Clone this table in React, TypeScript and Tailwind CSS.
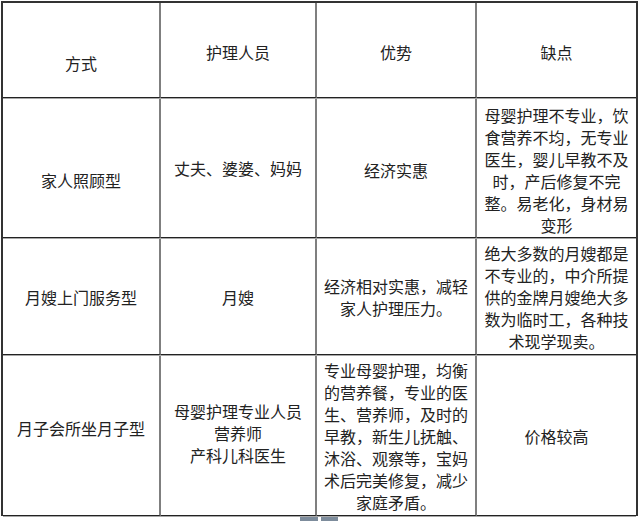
const font = { fontFamily: '"Noto Sans CJK SC", "Noto Sans", sans-serif' };

type Cell = { lines: string[]; pad?: string };

const rows: { h: string; cells: Cell[] }[] = [
  {
    h: 'h-[95px]',
    cells: [
      { lines: ['方式'], pad: 'pt-[26px]' },
      { lines: ['护理人员'], pad: 'pt-[4px]' },
      { lines: ['优势'], pad: 'pt-[4px]' },
      { lines: ['缺点'], pad: 'pt-[4px]' },
    ],
  },
  {
    h: 'h-[139px]',
    cells: [
      { lines: ['家人照顾型'], pad: 'pt-[24px]' },
      { lines: ['丈夫、婆婆、妈妈'] },
      { lines: ['经济实惠'], pad: 'pt-[4px]' },
      {
        lines: ['母婴护理不专业，饮', '食营养不均，无专业', '医生，婴儿早教不及', '时，产后修复不完', '整。易老化，身材易', '变形'],
        pad: 'pt-[3px]',
      },
    ],
  },
  {
    h: 'h-[116px]',
    cells: [
      { lines: ['月嫂上门服务型'] },
      { lines: ['月嫂'] },
      { lines: ['经济相对实惠，减轻', '家人护理压力。'] },
      { lines: ['绝大多数的月嫂都是', '不专业的，中介所提', '供的金牌月嫂绝大多', '数为临时工，各种技', '术现学现卖。'] },
    ],
  },
  {
    h: 'h-[160px]',
    cells: [
      { lines: ['月子会所坐月子型'], pad: 'pb-[16px]' },
      { lines: ['母婴护理专业人员', '营养师', '产科儿科医生'], pad: 'pb-[5px]' },
      {
        lines: ['专业母婴护理，均衡', '的营养餐，专业的医', '生、营养师，及时的', '早教，新生儿抚触、', '沐浴、观察等，宝妈', '术后完美修复，减少', '家庭矛盾。'],
      },
      { lines: ['价格较高'] },
    ],
  },
];

export default function App() {
  return (
    <div className="w-[640px] h-[521px] bg-white overflow-hidden text-[16px] leading-[22px] text-[#222]" style={font}>
      <div className="ml-px mt-px w-[637px] border-l-2 border-t-2 border-r-2 border-[#333]">
        <div className="grid grid-cols-[158px_156px_160px_159px] gap-y-px">
          {rows.map((r, ri) =>
            r.cells.map((c, ci) => (
              <div
                key={`${ri}-${ci}`}
                className={`${r.h} ${c.pad ?? ''} ${ci < 3 ? 'border-r-2 border-r-[#7f7f7f]' : ''} border-b border-b-[#222] shadow-[0_1px_0_#a8a8a8] flex flex-col items-center justify-center text-center whitespace-nowrap`}
              >
                {c.lines.map((l) => (
                  <div key={l}>{l}</div>
                ))}
              </div>
            ))
          )}
        </div>
      </div>
      <div className="ml-[300px] mt-px flex h-[4px] w-[38px] gap-[3px]">
        <div className="flex-1 bg-[#7d8c9c]" />
        <div className="flex-1 bg-[#7d8c9c]" />
      </div>
    </div>
  );
}
